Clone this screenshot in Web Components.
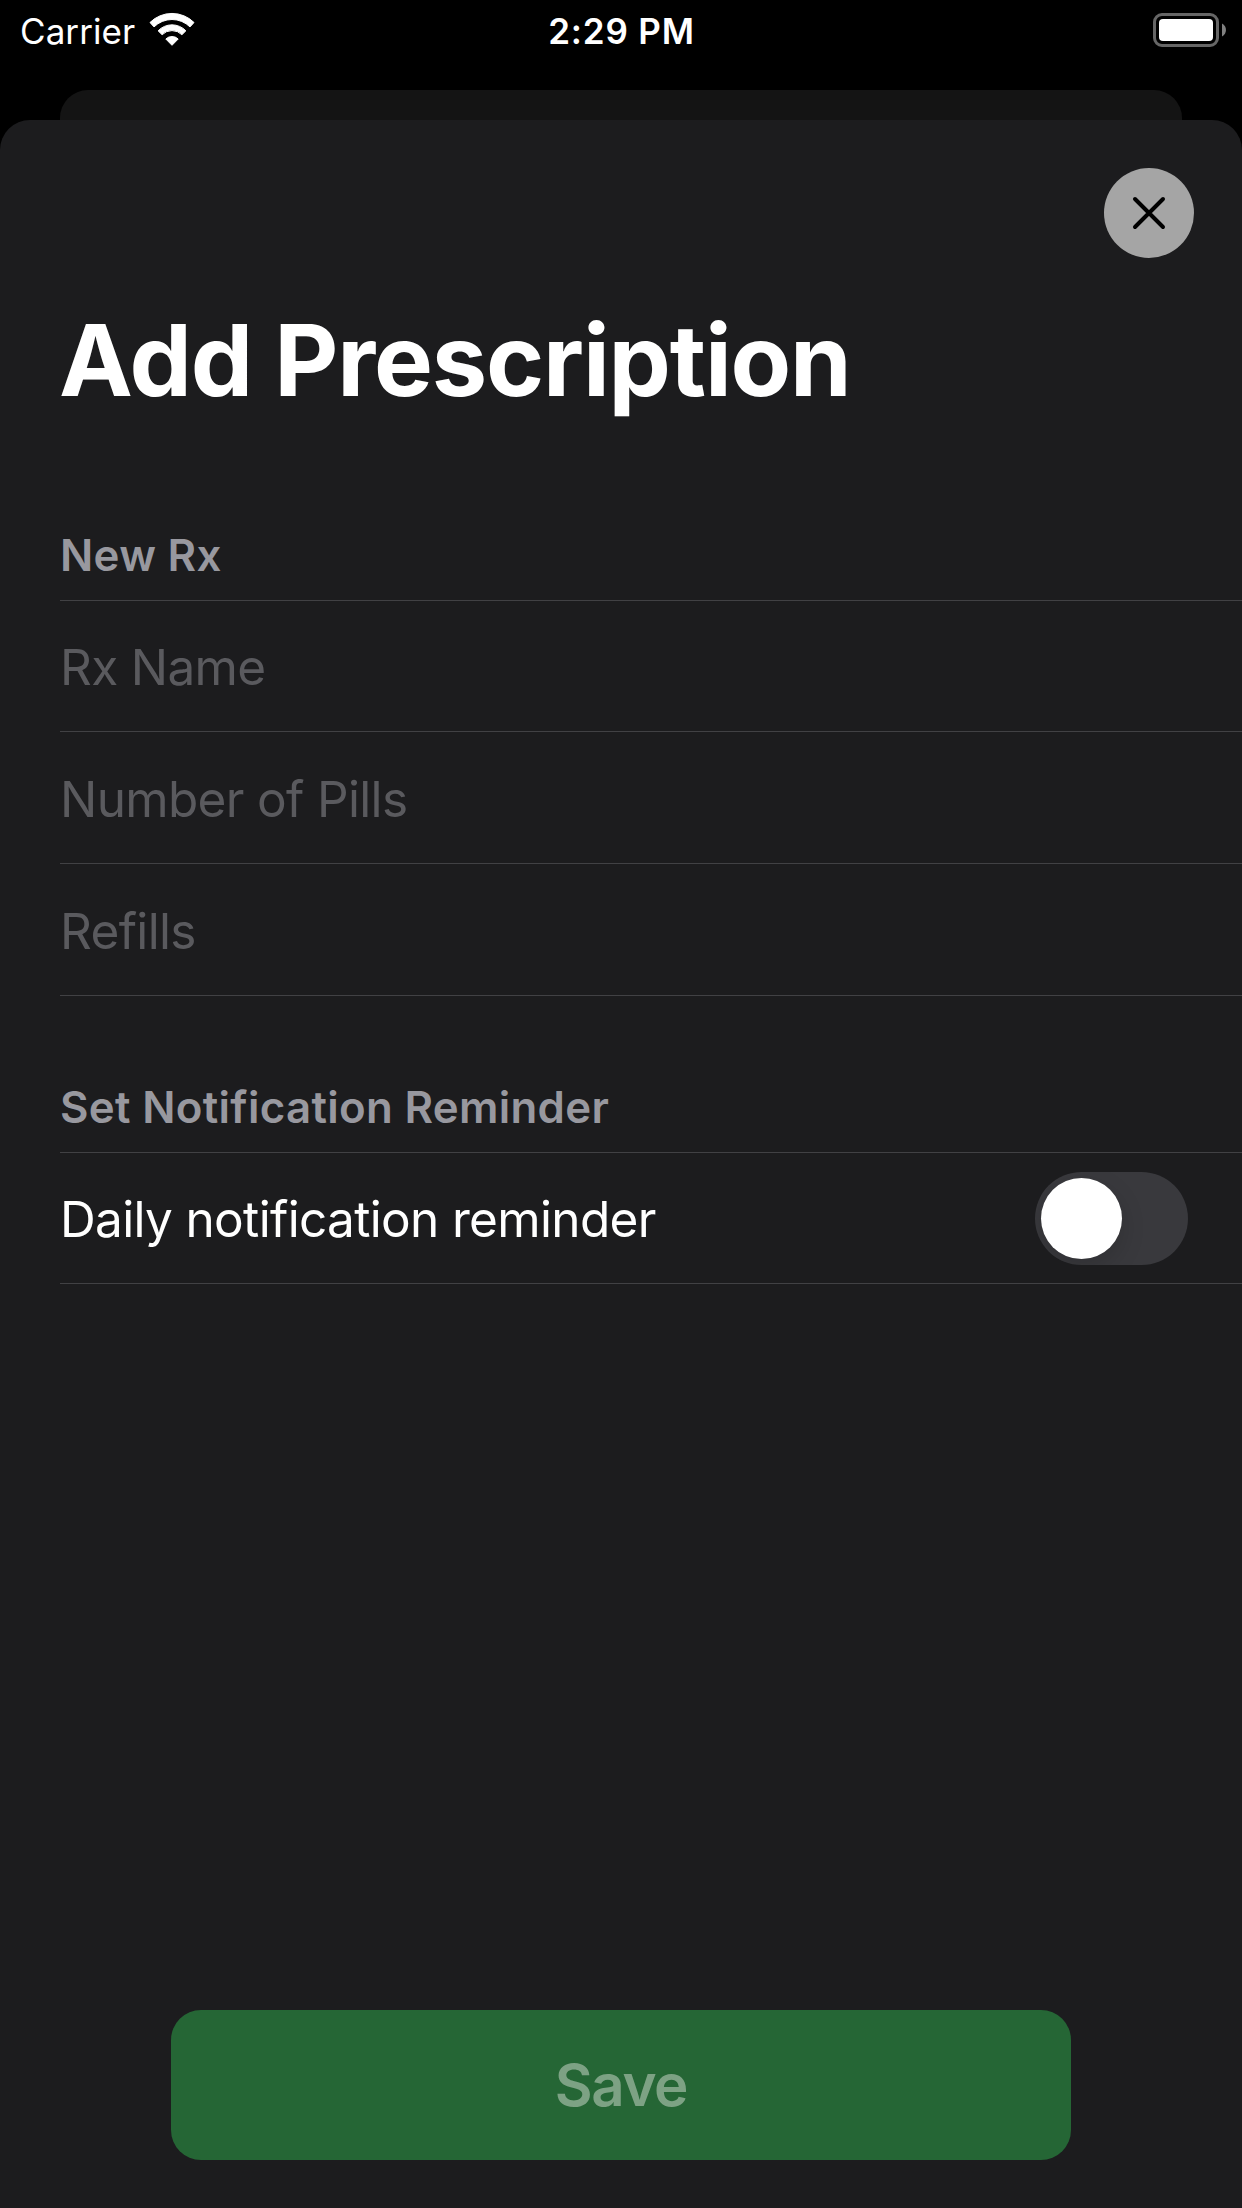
<!DOCTYPE html>
<html lang="en">
<head>
<meta charset="utf-8">
<title>Add Prescription</title>
<style>
  html, body { margin: 0; background: #000; }
  body { width: 1242px; height: 2208px; overflow: hidden; font-family: Inter, "Liberation Sans", sans-serif; color: #fff; }
</style>
</head>
<body>
<rx-screen>
  <status-bar slot="status" carrier="Carrier" time="2:29 PM"></status-bar>
  <modal-sheet heading="Add Prescription">
    <form-section heading="New Rx">
      <form-row class="placeholder">Rx Name</form-row>
      <form-row class="placeholder tall">Number of Pills</form-row>
      <form-row class="placeholder tall">Refills</form-row>
    </form-section>
    <form-section heading="Set Notification Reminder">
      <form-row>Daily notification reminder<toggle-switch slot="control"></toggle-switch></form-row>
    </form-section>
    <save-button slot="footer">Save</save-button>
  </modal-sheet>
</rx-screen>

<script>
const define = (name, render) => customElements.define(name, class extends HTMLElement {
  connectedCallback() {
    if (this.shadowRoot) return;
    this.attachShadow({ mode: 'open' }).innerHTML = render(this);
  }
});

define('rx-screen', () => `
  <style>
    :host { display: flex; flex-direction: column; width: 1242px; height: 2208px; background: #000; }
    .behind { flex: none; height: 30px; margin: 0 60px; background: #141414; border-radius: 28px 28px 0 0; }
  </style>
  <slot name="status"></slot>
  <div class="behind"></div>
  <slot></slot>`);

define('status-bar', el => `
  <style>
    :host { display: grid; grid-template-columns: 1fr auto 1fr; align-items: center; height: 60px; margin-bottom: 30px;
            font-size: 35px; line-height: 42px; }
    .left { display: flex; align-items: center; padding-left: 20px; }
    .carrier { padding-top: 2px; letter-spacing: .075px; }
    .time { padding: 2px 0 0 1px; font-weight: 600; letter-spacing: .81px; }
    .wifi { margin-left: 13px; }
    .battery { justify-self: end; margin-right: 14px; }
    svg { display: block; }
  </style>
  <div class="left">
    <span class="carrier">${el.getAttribute('carrier')}</span>
    <svg class="wifi" width="48" height="36" viewBox="148 12 48 36" fill="#fff" stroke="#fff" stroke-width="1" stroke-linejoin="round">
      <path d="M150 22.5A31.2 31.2 0 0 1 194 22.5L190 26.9A25.6 25.6 0 0 0 154 26.9Z"/>
      <path d="M158.1 30.8A19.2 19.2 0 0 1 185.9 30.8L181.9 34.7A14 14 0 0 0 162.1 34.7Z"/>
      <path d="M165.8 39A9 9 0 0 1 178.2 39L172 45.3Z"/>
    </svg>
  </div>
  <span class="time">${el.getAttribute('time')}</span>
  <svg class="battery" width="76" height="36" viewBox="1152 12 76 36">
    <rect x="1154.5" y="14.5" width="63" height="31" rx="7.5" fill="none" stroke="#666" stroke-width="3"/>
    <rect x="1159" y="19" width="54" height="22" rx="4" fill="#fff"/>
    <path d="M1222 23.6C1227.3 26 1227.3 34 1222 36.4Z" fill="#808080"/>
  </svg>`);

define('modal-sheet', el => `
  <style>
    :host { display: flex; flex-direction: column; flex: 1; background: #1c1c1e; border-radius: 30px 30px 0 0; }
    header { display: flex; justify-content: flex-end; padding: 48px 48px 0 0; }
    h1 { margin: 42px 0 0 59px; font-size: 99px; line-height: 120px; font-weight: 700; letter-spacing: -1.173px; white-space: nowrap; }
    main { display: flex; flex-direction: column; flex: 1; gap: 87px; padding: 111px 0 0 60px; }
    footer { display: flex; justify-content: center; padding-bottom: 48px; }
  </style>
  <header><close-button></close-button></header>
  <h1>${el.getAttribute('heading')}</h1>
  <main><slot></slot></main>
  <footer><slot name="footer"></slot></footer>`);

define('close-button', () => `
  <style>
    :host { display: flex; align-items: center; justify-content: center; width: 90px; height: 90px; border-radius: 50%; background: #a5a5a5; }
  </style>
  <svg width="36" height="36" viewBox="-18 -18 36 36" fill="none" stroke="#000" stroke-width="4" stroke-linecap="round">
    <path d="M-14 -14L14 14M14 -14L-14 14"/>
  </svg>`);

define('form-section', el => `
  <style>
    :host { display: block; }
    h2 { margin: 0; padding-bottom: 20px; border-bottom: 1px solid #414144; color: #98989f;
         font-size: 43.8px; line-height: 49px; font-weight: 600; letter-spacing: .32px; }
  </style>
  <h2>${el.getAttribute('heading')}</h2>
  <slot></slot>`);

define('form-row', () => `
  <style>
    :host { display: flex; align-items: center; justify-content: space-between; box-sizing: border-box; height: 131px;
            border-bottom: 1px solid #414144; padding-right: 54px; font-size: 49.5px; line-height: 60px; letter-spacing: -.66px; }
    :host(.tall) { height: 132px; }
    :host(.placeholder) { color: #5a5a5e; }
    .label { padding-top: 2px; }
    :host(.tall) .label { padding-top: 3px; }
  </style>
  <span class="label"><slot></slot></span>
  <slot name="control"></slot>`);

define('toggle-switch', () => `
  <style>
    :host { display: flex; align-items: center; box-sizing: border-box; width: 153px; height: 93px; padding: 6px; margin-top: 1px;
            border-radius: 47px; background: #39393d; overflow: hidden; }
    .knob { width: 81px; height: 81px; border-radius: 50%; background: #fff; box-shadow: 0 9px 24px rgba(0,0,0,.15); }
  </style>
  <div class="knob"></div>`);

define('save-button', () => `
  <style>
    :host { display: flex; align-items: center; justify-content: center; box-sizing: border-box; width: 900px; height: 150px;
            border-radius: 30px; background: #256635; color: #7da284; font-size: 58.2px; line-height: 70px; font-weight: 600; letter-spacing: -1.35px; }
  </style>
  <slot></slot>`);
</script>
</body>
</html>
